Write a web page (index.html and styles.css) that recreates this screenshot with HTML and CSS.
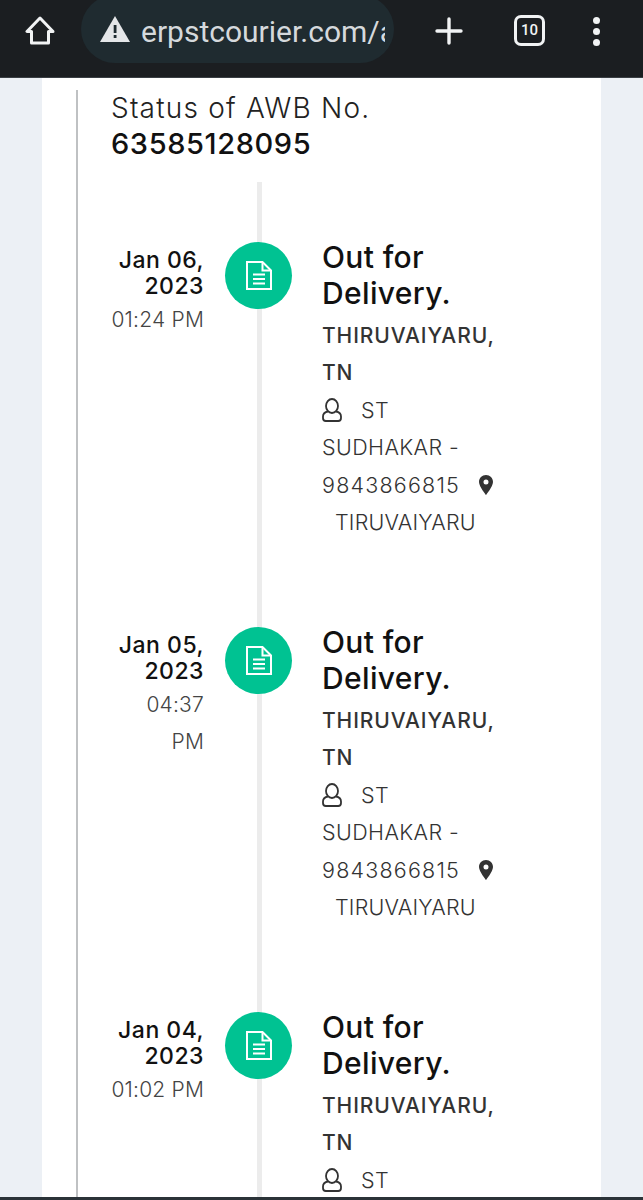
FILE: index.html
```html
<!DOCTYPE html>
<html lang="en">
<head>
  <meta charset="UTF-8">
  <title>Status of AWB</title>
  <link rel="stylesheet" href="styles.css">
</head>
<body>
  <div class="toolbar">
    <svg class="home-icon" width="30" height="29" viewBox="0 0 30 29" fill="none" stroke="#f1f3f4" stroke-width="3" stroke-linejoin="round"><path d="M15 2 2 15.500H6.500V27H23.500V15.500H28Z"/></svg>
    <div class="url-pill">
      <svg width="32" height="28" viewBox="0 0 32 28"><path d="M16 1 31 27H1Z" fill="#e4e6e8"/><rect x="14.7" y="10" width="2.8" height="8" fill="#1f2b30"/><rect x="14.7" y="20" width="2.8" height="3" fill="#1f2b30"/></svg>
      <span class="url-text">erpstcourier.com/a</span>
    </div>
    <svg class="plus-icon" width="28" height="28" viewBox="0 0 28 28" stroke="#f1f3f4" stroke-width="3.4" stroke-linecap="round"><path d="M14 2V26M2 14H26"/></svg>
    <div class="tab-count">10</div>
    <div class="menu-dots"><i></i><i></i><i></i></div>
  </div>

  <div class="page">
    <div class="card">
      <div class="inner">
        <div class="awb-head">
          <div class="awb-label">Status of AWB No.</div>
          <div class="awb-number">63585128095</div>
        </div>

        <div class="timeline">
          <div class="row">
            <div class="when">
              <div class="date">Jan 06,<br>2023</div>
              <div class="time">01:24 PM</div>
            </div>
            <div class="dot">
              <svg width="26" height="29" viewBox="0 0 26 29" fill="none" stroke="#fff" stroke-width="2"><path d="M1 1H16.500L25 9.500V28H1Z"/><path d="M16.500 1V9.500H25M7 13.500H19M7 18H19M7 22.500H19"/></svg>
            </div>
            <div class="info">
              <div class="title">Out for<br>Delivery.</div>
              <div class="place">THIRUVAIYARU,<br>TN</div>
              <div class="line"><svg class="user-icon" width="20" height="24" viewBox="0 0 20 24" fill="none" stroke="#333" stroke-width="1.8"><ellipse cx="10" cy="8" rx="6" ry="7"/><path d="M6 13.500C3 14 1 16 1 18.500V20C1 21.800 2 23 3.800 23H16.200C18 23 19 21.800 19 20V18.500C19 16 17 14 14 13.500"/></svg>ST</div>
              <div class="line">SUDHAKAR -</div>
              <div class="line"><span class="phone">9843866815</span><svg class="pin-icon" width="14" height="20" viewBox="0 0 14 20"><path fill-rule="evenodd" d="M7 0C3 0 0 3 0 7C0 11.500 7 20 7 20S14 11.500 14 7C14 3 11 0 7 0ZM7 4.500A2.500 2.500 0 1 1 7 9.500A2.500 2.500 0 1 1 7 4.500Z" fill="#333"/></svg></div>
              <div class="line town">TIRUVAIYARU</div>
            </div>
          </div>

          <div class="row">
            <div class="when">
              <div class="date">Jan 05,<br>2023</div>
              <div class="time">04:37<br>PM</div>
            </div>
            <div class="dot">
              <svg width="26" height="29" viewBox="0 0 26 29" fill="none" stroke="#fff" stroke-width="2"><path d="M1 1H16.500L25 9.500V28H1Z"/><path d="M16.500 1V9.500H25M7 13.500H19M7 18H19M7 22.500H19"/></svg>
            </div>
            <div class="info">
              <div class="title">Out for<br>Delivery.</div>
              <div class="place">THIRUVAIYARU,<br>TN</div>
              <div class="line"><svg class="user-icon" width="20" height="24" viewBox="0 0 20 24" fill="none" stroke="#333" stroke-width="1.8"><ellipse cx="10" cy="8" rx="6" ry="7"/><path d="M6 13.500C3 14 1 16 1 18.500V20C1 21.800 2 23 3.800 23H16.200C18 23 19 21.800 19 20V18.500C19 16 17 14 14 13.500"/></svg>ST</div>
              <div class="line">SUDHAKAR -</div>
              <div class="line"><span class="phone">9843866815</span><svg class="pin-icon" width="14" height="20" viewBox="0 0 14 20"><path fill-rule="evenodd" d="M7 0C3 0 0 3 0 7C0 11.500 7 20 7 20S14 11.500 14 7C14 3 11 0 7 0ZM7 4.500A2.500 2.500 0 1 1 7 9.500A2.500 2.500 0 1 1 7 4.500Z" fill="#333"/></svg></div>
              <div class="line town">TIRUVAIYARU</div>
            </div>
          </div>

          <div class="row">
            <div class="when">
              <div class="date">Jan 04,<br>2023</div>
              <div class="time">01:02 PM</div>
            </div>
            <div class="dot">
              <svg width="26" height="29" viewBox="0 0 26 29" fill="none" stroke="#fff" stroke-width="2"><path d="M1 1H16.500L25 9.500V28H1Z"/><path d="M16.500 1V9.500H25M7 13.500H19M7 18H19M7 22.500H19"/></svg>
            </div>
            <div class="info">
              <div class="title">Out for<br>Delivery.</div>
              <div class="place">THIRUVAIYARU,<br>TN</div>
              <div class="line"><svg class="user-icon" width="20" height="24" viewBox="0 0 20 24" fill="none" stroke="#333" stroke-width="1.8"><ellipse cx="10" cy="8" rx="6" ry="7"/><path d="M6 13.500C3 14 1 16 1 18.500V20C1 21.800 2 23 3.800 23H16.200C18 23 19 21.800 19 20V18.500C19 16 17 14 14 13.500"/></svg>ST</div>
            </div>
          </div>
        </div>
      </div>
    </div>
  </div>

  <div class="bottom-edge"></div>
</body>
</html>
```

FILE: styles.css
```css
html, body {
  height: 100%;
}
body {
  margin: 0;
  height: 1200px;
  display: flex;
  flex-direction: column;
  overflow: hidden;
  background-color: #ecf0f5;
  font-family: Inter, "Noto Sans", sans-serif;
  color: #333;
}

/* browser bar */
.toolbar {
  flex: none;
  height: 77px;
  display: flex;
  align-items: flex-start;
  overflow: hidden;
  background-color: #1b1e21;
  border-bottom: 1px solid #3a3f44;
}
.home-icon {
  margin: 16px 0 0 25px;
}
.url-pill {
  width: 313px;
  height: 68px;
  margin: -5px 0 0 26px;
  padding-left: 18px;
  box-sizing: border-box;
  display: flex;
  align-items: center;
  gap: 10px;
  overflow: hidden;
  border-radius: 34px;
  background-color: #1f2b30;
}
.url-text {
  width: 244px;
  flex: none;
  padding-top: 4px;
  overflow: hidden;
  font-family: Roboto, sans-serif;
  font-size: 30px;
  color: #d5d9dc;
  white-space: nowrap;
}
.plus-icon {
  margin: 17px 0 0 41px;
}
.tab-count {
  width: 25px;
  height: 25px;
  margin: 15px 0 0 51px;
  border: 3px solid #f1f3f4;
  border-radius: 7px;
  font-family: Roboto, sans-serif;
  font-size: 15px;
  font-weight: 500;
  line-height: 25px;
  text-align: center;
  color: #f1f3f4;
}
.menu-dots {
  margin: 17px 0 0 48px;
  display: flex;
  flex-direction: column;
  gap: 4px;
}
.menu-dots i {
  display: block;
  width: 7px;
  height: 7px;
  border-radius: 50%;
  background-color: #f1f3f4;
}

/* page */
.page {
  flex: 1;
  min-height: 0;
  padding: 0 42px;
  overflow: hidden;
}
.card {
  height: 100%;
  padding: 12px 0 0 34px;
  box-sizing: border-box;
  background-color: #fff;
}
.inner {
  height: 100%;
  border-left: 2px solid #bfc1c3;
}
.awb-head {
  height: 92px;
  padding-left: 33px;
}
.awb-label {
  font-size: 28px;
  font-weight: 300;
  letter-spacing: 1.2px;
  line-height: 36px;
  color: #222;
}
.awb-number {
  font-size: 29px;
  font-weight: 500;
  letter-spacing: .6px;
  line-height: 36px;
  color: #111;
}

.timeline {
  padding-top: 60px;
  background: linear-gradient(#ececec, #ececec) no-repeat 179px 0 / 5px 100%;
}
.row {
  height: 385px;
  display: grid;
  grid-template-columns: 126px 67px 1fr;
  column-gap: 21px;
}
.when {
  padding-top: 5px;
  text-align: right;
}
.date {
  font-size: 23px;
  font-weight: 500;
  letter-spacing: .5px;
  line-height: 26px;
  color: #111;
}
.time {
  margin-top: 2px;
  font-size: 21px;
  font-weight: 300;
  letter-spacing: .2px;
  line-height: 37px;
  color: #444;
}
.dot {
  width: 67px;
  height: 67px;
  display: flex;
  align-items: center;
  justify-content: center;
  border-radius: 50%;
  background-color: #00c292;
}
.info {
  margin: -3px 0 0 9px;
  white-space: nowrap;
}
.title {
  margin-bottom: 6px;
  font-size: 30px;
  font-weight: 500;
  letter-spacing: .35px;
  line-height: 36px;
  color: #111;
}
.place {
  font-size: 21px;
  font-weight: 500;
  letter-spacing: .9px;
  line-height: 37px;
}
.line {
  display: flex;
  align-items: center;
  height: 37.5px;
  font-size: 21.5px;
  font-weight: 300;
  letter-spacing: .4px;
}
.phone {
  letter-spacing: 1.2px;
}
.user-icon {
  margin-right: 19px;
}
.pin-icon {
  margin-left: 19px;
}
.town {
  padding-left: 13px;
  letter-spacing: .2px;
}

.bottom-edge {
  flex: none;
  height: 3px;
  background-color: #2b3338;
}
```
